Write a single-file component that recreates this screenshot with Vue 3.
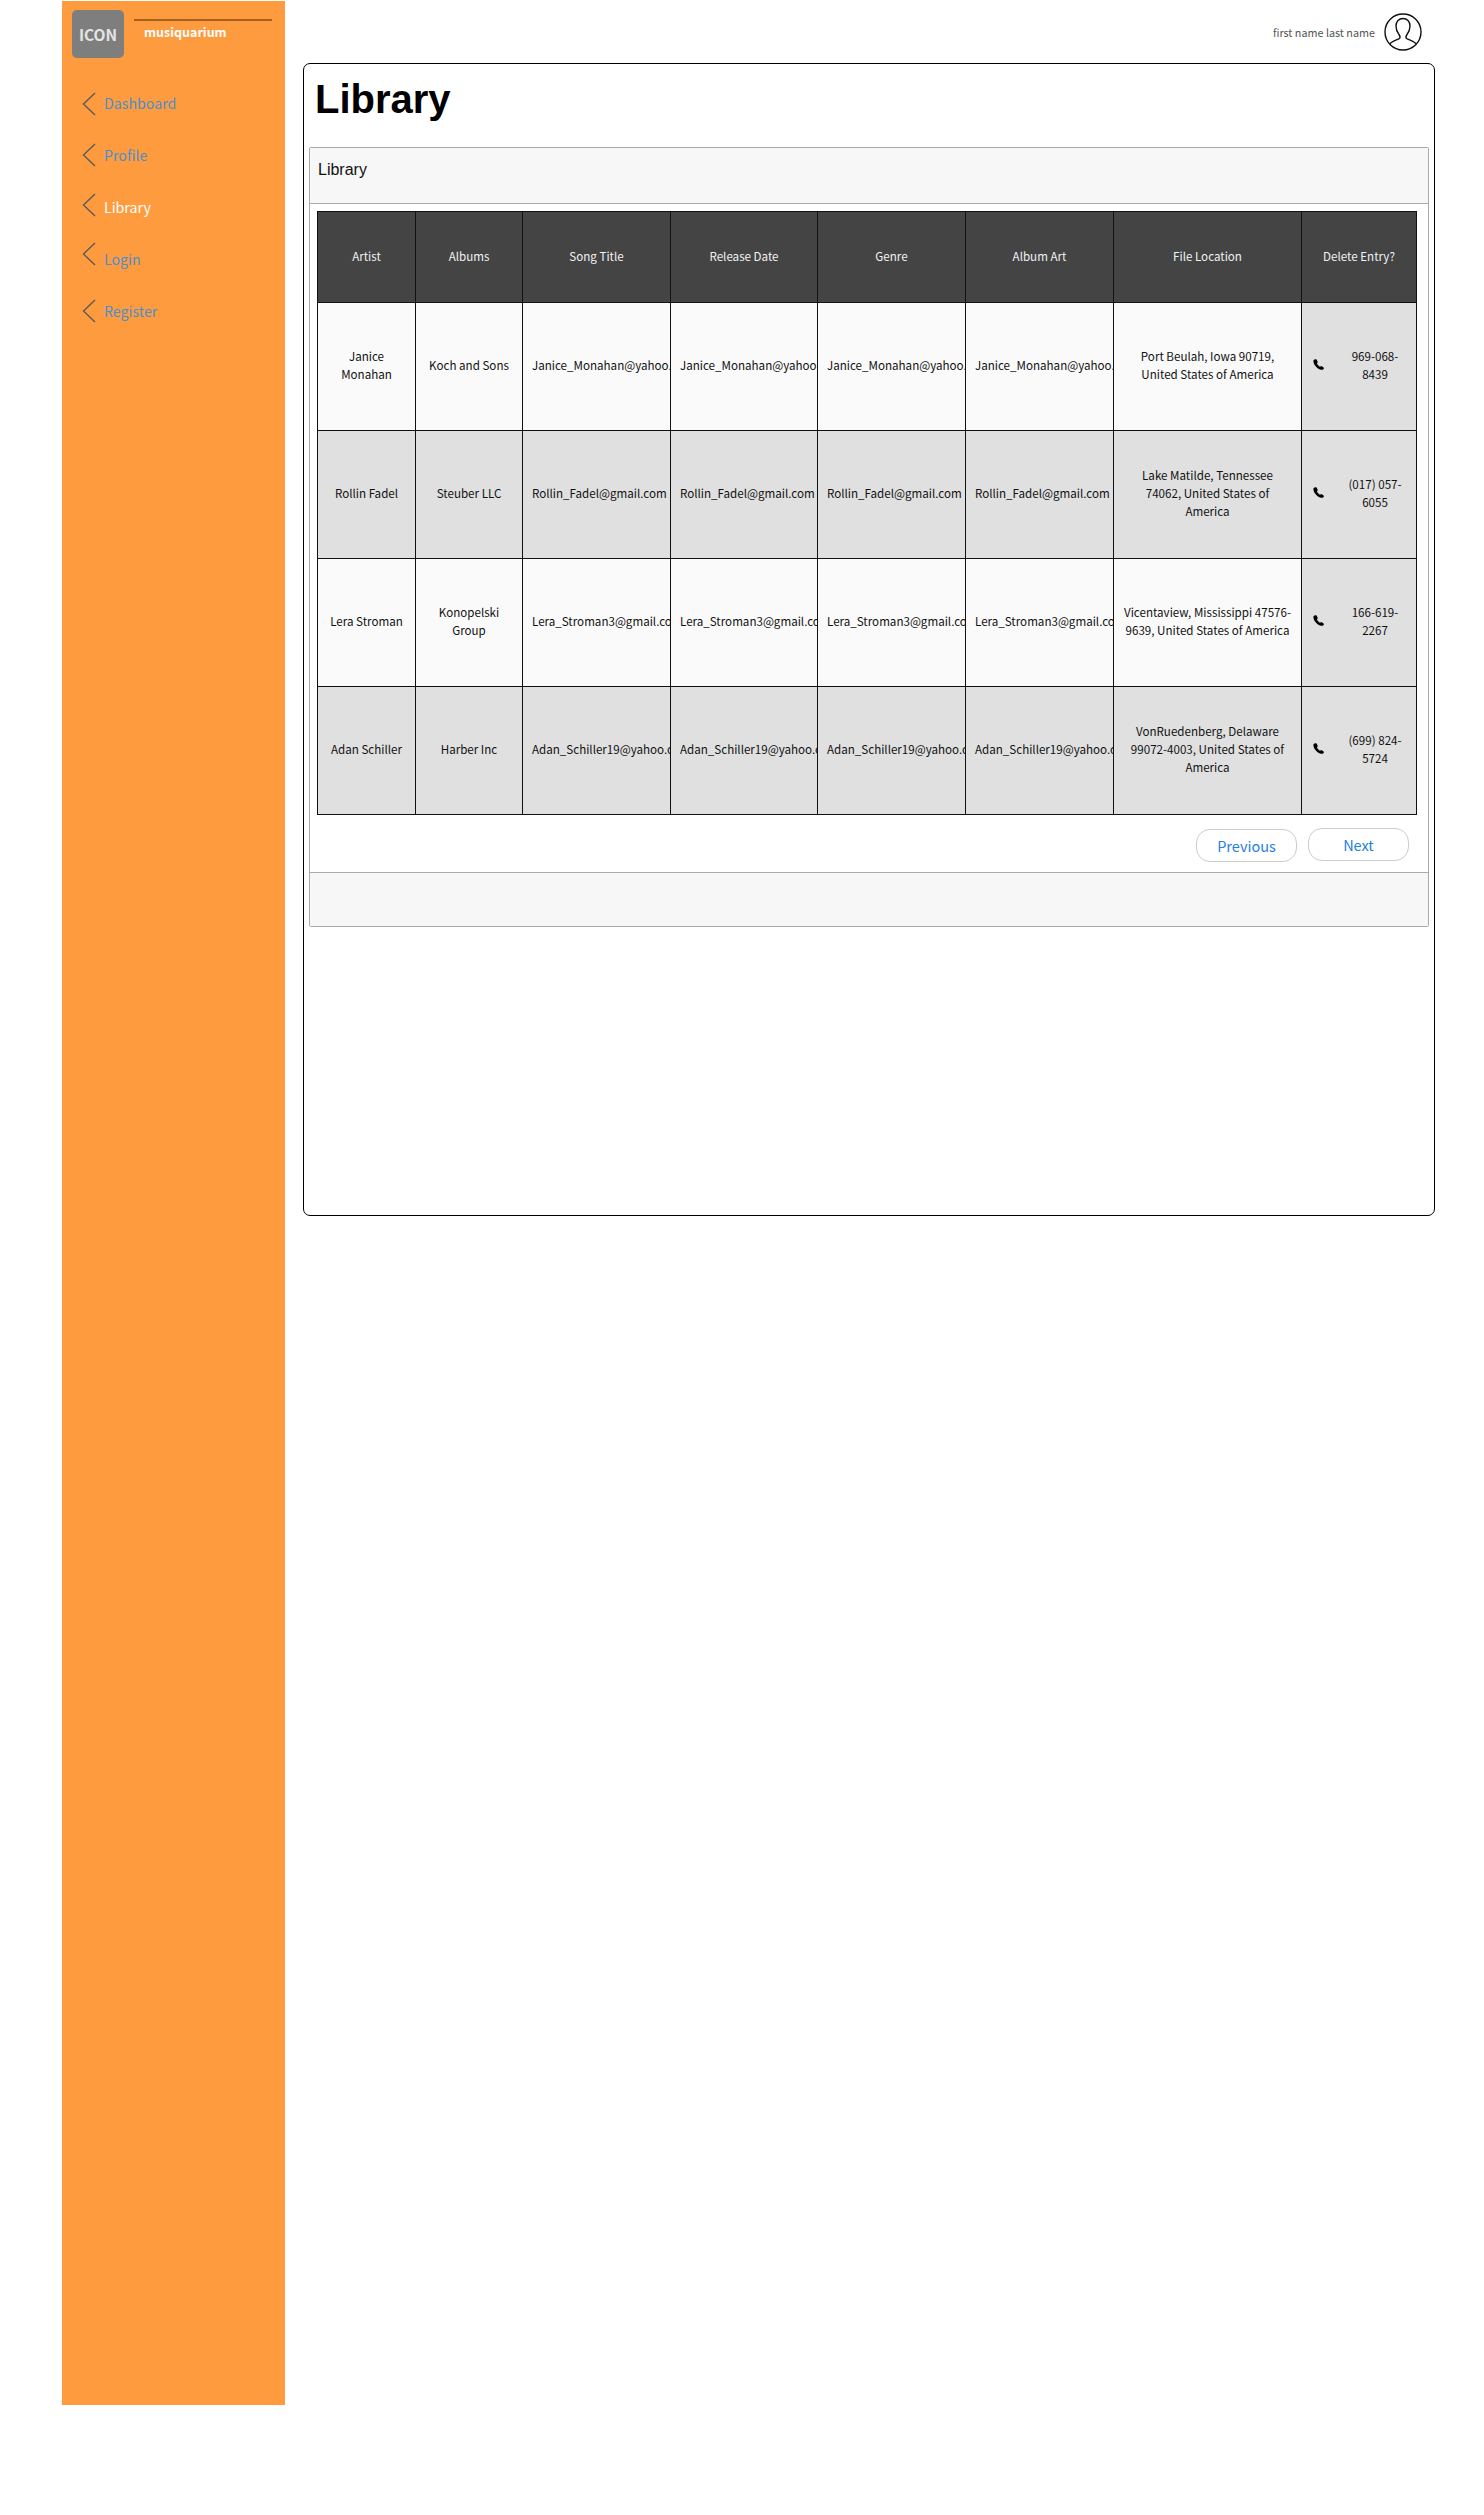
<script setup>
const nav = [
  { label: 'Dashboard', shift: 1 },
  { label: 'Profile', shift: 0 },
  { label: 'Library', active: true, shift: -2 },
  { label: 'Login', shift: -5 },
  { label: 'Register', shift: 0 }
]
const columns = ['Artist', 'Albums', 'Song Title', 'Release Date', 'Genre', 'Album Art', 'File Location', 'Delete Entry?']
const widths = [98, 107, 148, 147, 148, 148, 188, 115]
const rows = [
  { artist: 'Janice Monahan', album: 'Koch and Sons', email: 'Janice_Monahan@yahoo.com', location: 'Port Beulah, Iowa 90719,\nUnited States of America', phone: '969-068-8439' },
  { artist: 'Rollin Fadel', album: 'Steuber LLC', email: 'Rollin_Fadel@gmail.com', location: 'Lake Matilde, Tennessee\n74062, United States of\nAmerica', phone: '(017) 057-6055' },
  { artist: 'Lera Stroman', album: 'Konopelski Group', email: 'Lera_Stroman3@gmail.com', location: 'Vicentaview, Mississippi 47576-\n9639, United States of America', phone: '166-619-2267' },
  { artist: 'Adan Schiller', album: 'Harber Inc', email: 'Adan_Schiller19@yahoo.com', location: 'VonRuedenberg, Delaware\n99072-4003, United States of\nAmerica', phone: '(699) 824-5724' }
]
</script>

<template>
  <div class="page">
    <aside class="sidebar">
      <div class="brand">
        <div class="logo">ICON</div>
        <div class="brand-text">
          <div class="rule"></div>
          <div class="name">musiquarium</div>
        </div>
      </div>
      <nav class="nav">
        <a v-for="item in nav" :key="item.label" class="nav-item" :class="{ active: item.active }">
          <svg class="chev" :style="{ transform: `translateY(${item.shift}px)` }" width="14" height="24" viewBox="0 0 14 24"><path d="M13 1 L1.5 12 L13 23" fill="none" stroke="#5a5a5a" stroke-width="1.4"/></svg>
          <span>{{ item.label }}</span>
        </a>
      </nav>
    </aside>

    <div class="content">
      <header class="topbar">
        <span class="user">first name last name</span>
        <svg class="avatar" width="38" height="38" viewBox="0 0 38 38">
          <circle cx="19" cy="19" r="18" fill="none" stroke="#111" stroke-width="1.4"/>
          <path d="M5.5 31 C8 28 13 27 15.5 25.5 C16.5 24.5 16 23 15 21.5 C13 19 12 16 12 13 C12 8.5 15 5.5 19 5.5 C23 5.5 26 8.5 26 13 C26 16 25 19 23 21.5 C22 23 21.5 24.5 22.5 25.5 C25 27 30 28 32.5 31" fill="none" stroke="#111" stroke-width="1.4"/>
        </svg>
      </header>

      <main class="card">
        <h1 class="title">Library</h1>
        <section class="panel">
          <div class="panel-head">Library</div>
          <div class="panel-body">
            <table class="table">
              <colgroup>
                <col v-for="(w, i) in widths" :key="i" :style="{ width: w + 'px' }" />
              </colgroup>
              <thead>
                <tr>
                  <th v-for="c in columns" :key="c">{{ c }}</th>
                </tr>
              </thead>
              <tbody>
                <tr v-for="(r, i) in rows" :key="r.artist" :class="i % 2 ? 'even' : 'odd'">
                  <td>{{ r.artist }}</td>
                  <td>{{ r.album }}</td>
                  <td class="clip"><div>{{ r.email }}</div></td>
                  <td class="clip"><div>{{ r.email }}</div></td>
                  <td class="clip"><div>{{ r.email }}</div></td>
                  <td class="clip"><div>{{ r.email }}</div></td>
                  <td class="location">{{ r.location }}</td>
                  <td class="phone">
                    <div class="phone-wrap">
                      <svg width="11" height="11" viewBox="0 0 11 11"><path d="M2.4 .2 C1 .5 .2 1.2 .4 2.7 C1 6.3 4.5 10 8.3 10.8 C9.6 11 10.6 10.3 10.9 9.2 L10.4 8.2 L8.2 6.9 L7.1 7.8 C5.9 7.2 4.4 5.6 3.9 4.2 L4.9 3.2 L3.6 .6 Z" fill="#000"/></svg>
                      <span>{{ r.phone }}</span>
                    </div>
                  </td>
                </tr>
              </tbody>
            </table>
            <div class="pager">
              <button class="btn prev">Previous</button>
              <button class="btn">Next</button>
            </div>
          </div>
          <div class="panel-foot"></div>
        </section>
      </main>
    </div>
  </div>
</template>

<style>
html, body { margin: 0; background: #fff; }
</style>

<style scoped>
.page {
  display: flex;
  align-items: flex-start;
  min-height: 2515px;
  padding-left: 62px;
  box-sizing: border-box;
  font-family: "Noto Sans CJK JP", "Noto Sans", sans-serif;
}
.sidebar {
  width: 223px;
  height: 2404px;
  margin-top: 1px;
  background: #ff9b3f;
  flex: none;
}
.brand { display: flex; padding: 9px 0 0 10px; }
.logo {
  width: 52px;
  height: 48px;
  border-radius: 5px;
  background: #7e7e7e;
  color: #e4e4e4;
  font-weight: 700;
  font-size: 15.5px;
  display: flex;
  align-items: center;
  justify-content: center;
}
.brand-text { margin-left: 10px; width: 138px; padding-top: 9px; }
.rule { height: 2px; background: #a5601f; }
.name {
  color: #fff;
  font-weight: 700;
  font-size: 12.5px;
  line-height: 20px;
  margin: 1px 0 0 10px;
}
.nav { padding: 19px 0 0 20px; display: flex; flex-direction: column; }
.nav-item {
  height: 52px;
  display: flex;
  align-items: center;
  color: #4b90cb;
  font-size: 14.2px;
}
.nav-item.active { color: #fff; }
.chev { margin-right: 8px; flex: none; }

.content { margin-left: 18px; width: 1132px; flex: none; }
.topbar {
  height: 63px;
  display: flex;
  align-items: center;
  justify-content: flex-end;
  padding-right: 13px;
  box-sizing: border-box;
}
.user { font-size: 10.8px; color: #555; margin-right: 9px; }
.avatar { flex: none; }
.card {
  height: 1153px;
  box-sizing: border-box;
  border: 1px solid #000;
  border-radius: 7px;
  padding: 0 5px;
}
.title {
  margin: 0;
  font: 700 40px/46px "Liberation Sans", Arial, sans-serif;
  color: #000;
  padding: 12px 0 0 6px;
  height: 83px;
  box-sizing: border-box;
}
.panel {
  border: 1px solid #aaa;
  border-radius: 2px;
}
.panel-head {
  height: 56px;
  box-sizing: border-box;
  background: #f7f7f7;
  border-bottom: 1px solid #aaa;
  padding: 12px 8px;
  font: 16px/20px "Liberation Sans", Arial, sans-serif;
  color: #111;
}
.panel-body { padding: 7px 12px 0 7px; height: 668px; box-sizing: border-box; }
.table {
  width: 1099px;
  table-layout: fixed;
  border-collapse: collapse;
  font-size: 11.6px;
  line-height: 18px;
  color: #111;
  text-align: center;
}
th, td { border: 1px solid #111; padding: 0 8px; font-weight: 400; }
th { background: #444; color: #f2f2f2; height: 88px; padding-bottom: 2px; }
td { height: 123px; padding-bottom: 4px; }
.odd td { background: #fafafa; }
.even td { background: #e0e0e0; }
td.clip { padding: 0 0 4px; overflow: hidden; }
td.clip > div { white-space: nowrap; text-align: left; padding-left: 9px; }
td.location { white-space: pre-line; padding: 0 4px 4px; }
.odd td.phone, .even td.phone { background: #e0e0e0; padding: 0 0 4px 11px; }
.phone-wrap { display: flex; align-items: center; }
.phone-wrap svg { flex: none; }
.phone-wrap span { width: 60px; margin-left: 21px; }
.pager { display: flex; justify-content: flex-end; gap: 11px; padding: 13px 7px 0 0; align-items: flex-start; }
.btn {
  width: 101px;
  height: 33px;
  border: 1px solid #ccc;
  border-radius: 14px;
  background: #fff;
  color: #1f82dd;
  font: 400 14.5px/20px "Noto Sans CJK JP", sans-serif;
  padding: 0;
}
.prev { margin-top: 1px; }
.panel-foot {
  height: 54px;
  background: #f7f7f7;
  border-top: 1px solid #aaa;
  box-sizing: border-box;
}
</style>
